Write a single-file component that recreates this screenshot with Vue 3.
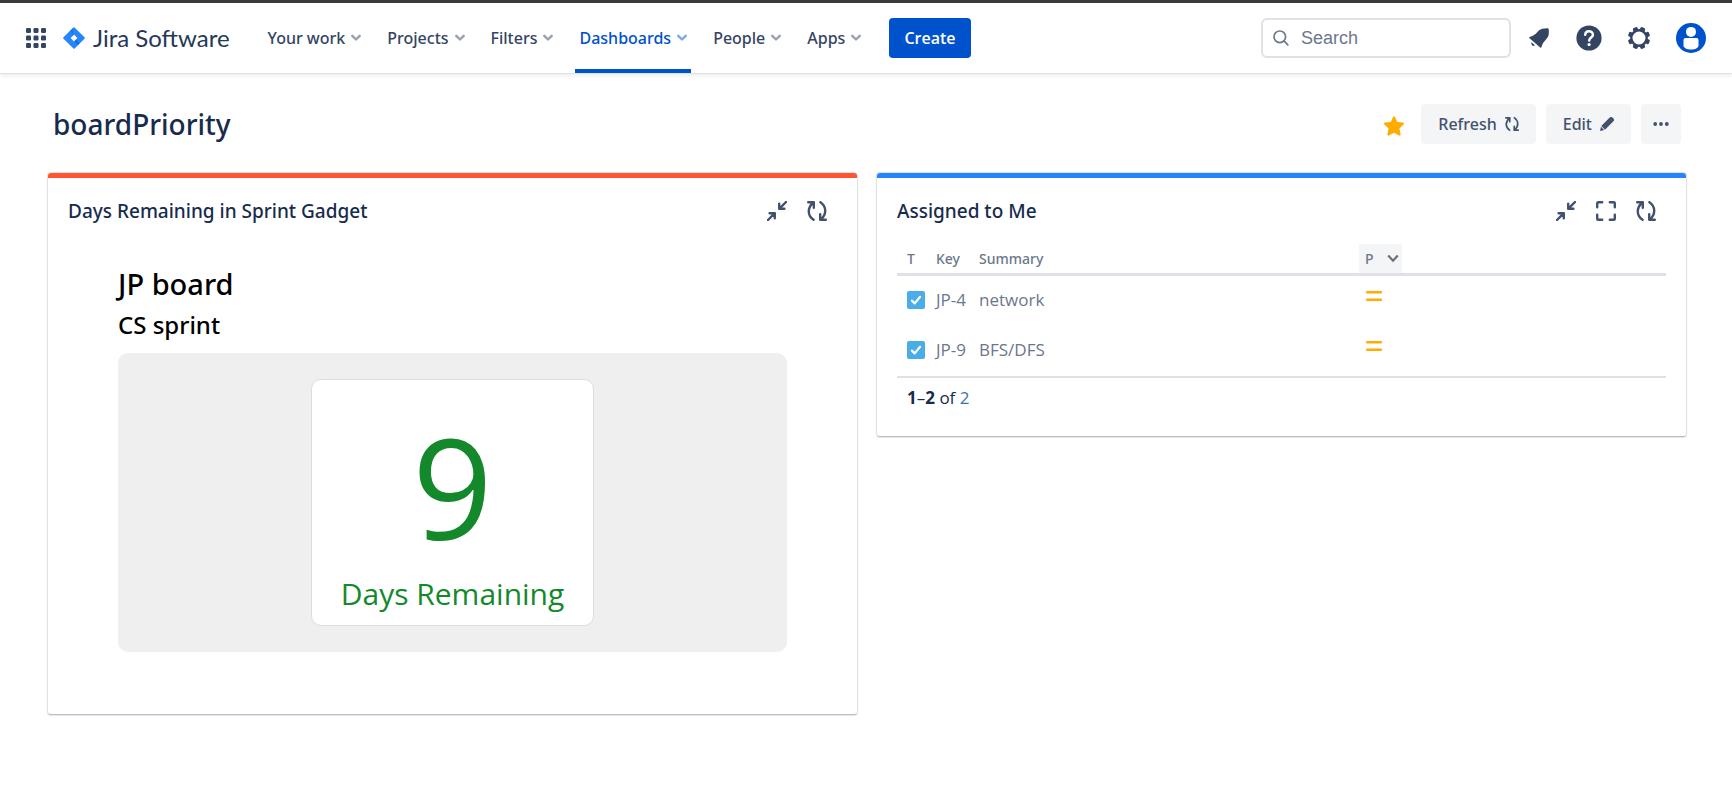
<script setup>
import { ref } from 'vue'

const navItems = [
  { label: 'Your work' },
  { label: 'Projects' },
  { label: 'Filters' },
  { label: 'Dashboards', active: true },
  { label: 'People' },
  { label: 'Apps' }
]

const issues = [
  { key: 'JP-4', summary: 'network' },
  { key: 'JP-9', summary: 'BFS/DFS' }
]

const dots = [0, 1, 2].flatMap((r) => [0, 1, 2].map((c) => ({ x: c * 7.5, y: r * 7.5 })))
const query = ref('')
</script>

<template>
  <div class="page">
    <header class="topbar">
      <button class="icon-btn switcher" type="button" aria-label="Switch to another product">
        <svg width="20" height="20" viewBox="0 0 20 20" fill="#344563">
          <rect v-for="(d, i) in dots" :key="i" :x="d.x" :y="d.y" width="5" height="5" rx="1.2" />
        </svg>
      </button>
      <a class="brand" href="#">
        <svg width="22" height="22" viewBox="0 0 22 22" aria-hidden="true">
          <defs>
            <linearGradient id="fold-a" x1="0.9" y1="0" x2="0.4" y2="0.6">
              <stop offset="0.2" stop-color="#0052cc" />
              <stop offset="1" stop-color="#2684ff" />
            </linearGradient>
          </defs>
          <path d="M11 0 21.5 10.3a1 1 0 0 1 0 1.4L11 22 .5 11.700a1 1 0 0 1 0-1.400zM11 7.600 7.600 11 11 14.400 14.400 11z" fill="#2684ff" fill-rule="evenodd" />
          <path d="M11 7.600C8.800 5.400 8.800 2.500 10.800.400L5.500 5.500 9.300 9.300z" fill="url(#fold-a)" />
          <path d="M11 14.400c2.200 2.200 2.200 5.100.200 7.200l5.300-5.100-3.800-3.800z" fill="url(#fold-a)" />
        </svg>
        <span>Jira Software</span>
      </a>
      <nav class="nav" aria-label="Primary">
        <button v-for="item in navItems" :key="item.label" type="button" class="nav-item" :class="{ active: item.active }">
          {{ item.label }}
          <svg width="10" height="8" viewBox="0 0 10 8" fill="none" stroke="currentColor" stroke-width="2.400" stroke-linecap="round" stroke-linejoin="round">
            <path d="M1.300 1.800 5 5.500 8.700 1.800" />
          </svg>
        </button>
      </nav>
      <button class="create" type="button">Create</button>
      <div class="tools">
        <label class="search">
          <svg width="16" height="16" viewBox="0 0 16 16" fill="none" stroke="#6b778c" stroke-width="1.700" stroke-linecap="round">
            <circle cx="6.800" cy="6.800" r="5.800" />
            <path d="m11.200 11.200 3.600 3.600" />
          </svg>
          <input v-model="query" type="text" placeholder="Search" aria-label="Search" />
        </label>
        <button class="icon-btn bell" type="button" aria-label="Notifications">
          <svg width="20" height="20" viewBox="0 0 20 20" fill="#344563">
            <path d="M.6 8.900C3.400 8 6 6.700 8.200 4.200 10.500 1.500 12.500.300 15.500.400l2.800-.1c1 0 1.500.500 1.500 1.500V5.500c-.1 2.400-1 4.200-3.200 6.400-2.400 2.300-3.300 4.100-4.100 7.200-.2.800-.7 1-1.300.400L.3 10.100C-.1 9.600 0 9.100.600 8.900z" />
            <path d="M2.600 14.200 6 17.600a2.500 2.500 0 0 1-3.400-3.400z" />
          </svg>
        </button>
        <button class="icon-btn" type="button" aria-label="Help">
          <svg width="26" height="26" viewBox="0 0 26 26">
            <circle cx="13" cy="13" r="12.600" fill="#344563" />
            <path d="M9.200 9.700C9.300 7.500 10.900 6.200 13 6.200s3.900 1.400 3.900 3.500c0 2.900-3.700 2.900-3.700 5.900" fill="none" stroke="#fff" stroke-width="2.500" stroke-linecap="round" />
            <circle cx="13.100" cy="19.500" r="1.600" fill="#fff" />
          </svg>
        </button>
        <button class="icon-btn" type="button" aria-label="Settings">
          <svg width="24" height="24" viewBox="0 0 24 24">
            <g fill="#344563">
              <rect v-for="a in 8" :key="a" x="9.500" y="0.800" width="5" height="6" rx="1.500" :transform="`rotate(${a * 45 + 22.5} 12 12)`" />
            </g>
            <circle cx="12" cy="12" r="7.700" fill="#fff" stroke="#344563" stroke-width="2.400" />
          </svg>
        </button>
        <button class="icon-btn" type="button" aria-label="Your profile">
          <svg width="30" height="30" viewBox="0 0 30 30">
            <circle cx="15" cy="15" r="15" fill="#0052cc" />
            <circle cx="15" cy="8.900" r="5" fill="#fff" />
            <path d="M9.500 15h11a2 2 0 0 1 2 2v5.500c0 2.500-3.500 4-7.500 4s-7.500-1.500-7.500-4V17a2 2 0 0 1 2-2z" fill="#fff" />
          </svg>
        </button>
      </div>
    </header>

    <main class="content">
      <div class="heading">
        <h1>boardPriority</h1>
        <div class="actions">
          <button class="icon-btn star" type="button" aria-label="Starred">
            <svg width="20" height="20" viewBox="0 0 20 20" fill="#ffab00">
              <path d="M9.100.800c.4-.8 1.400-.8 1.800 0l2.300 5.200 5.800.6c1 .1 1.300 1.100.600 1.800l-4.200 4 1.200 5.900c.2 1-.6 1.600-1.500 1.200L10 16.700l-5.100 2.800c-.9.400-1.700-.2-1.500-1.200l1.200-5.900-4.200-4C-.3 7.700 0 6.700 1 6.600L6.800 6z" />
            </svg>
          </button>
          <button class="action" type="button">
            Refresh
            <svg width="14" height="14" viewBox="0 0 20 20" class="stroke-icon">
              <path d="M1.200 1.200H6.800V6.800M6.500 1.500C.2 6.500.2 14.500 6.600 18.800M18.800 18.800H13.200V13.200M13.500 18.500C19.800 13.500 19.800 5.500 13.400 1.200" />
            </svg>
          </button>
          <button class="action" type="button">
            Edit
            <svg width="14" height="14" viewBox="0 0 14 14" fill="#42526e">
              <path d="M8.700 1.600 9.700.600a2 2 0 0 1 2.800 0l.9.900a2 2 0 0 1 0 2.800L12.400 5.300 5 12.700 1.300 9zM.9 9.800l3.300 3.300-3.500.8c-.4.100-.6-.1-.5-.5z" />
            </svg>
          </button>
          <button class="action more" type="button" aria-label="More">
            <svg width="16" height="4" viewBox="0 0 16 4" fill="#42526e">
              <circle cx="2.200" cy="2" r="1.900" /><circle cx="8" cy="2" r="1.900" /><circle cx="13.800" cy="2" r="1.900" />
            </svg>
          </button>
        </div>
      </div>

      <div class="gadgets">
        <section class="gadget red">
          <div class="gadget-head">
            <h2>Days Remaining in Sprint Gadget</h2>
            <div class="gadget-tools">
              <button class="icon-btn" type="button" aria-label="Minimize">
                <svg width="20" height="20" viewBox="0 0 20 20" class="stroke-icon">
                  <path d="M19 1 12.200 7.800M12.200 2.800V7.800H17.400M1 19 7.800 12.200M2.600 12.200H7.800V17.200" />
                </svg>
              </button>
              <button class="icon-btn" type="button" aria-label="Refresh gadget">
                <svg width="20" height="20" viewBox="0 0 20 20" class="stroke-icon">
                  <path d="M1.200 1.200H6.800V6.800M6.500 1.500C.2 6.500.2 14.500 6.600 18.800M18.800 18.800H13.200V13.200M13.500 18.500C19.800 13.500 19.800 5.500 13.400 1.200" />
                </svg>
              </button>
            </div>
          </div>
          <div class="sprint">
            <h3>JP board</h3>
            <h4>CS sprint</h4>
            <div class="panel">
              <div class="counter">
                <div class="number">9</div>
                <div class="caption">Days Remaining</div>
              </div>
            </div>
          </div>
        </section>

        <section class="gadget blue">
          <div class="gadget-head">
            <h2>Assigned to Me</h2>
            <div class="gadget-tools">
              <button class="icon-btn" type="button" aria-label="Minimize">
                <svg width="20" height="20" viewBox="0 0 20 20" class="stroke-icon">
                  <path d="M19 1 12.200 7.800M12.200 2.800V7.800H17.400M1 19 7.800 12.200M2.600 12.200H7.800V17.200" />
                </svg>
              </button>
              <button class="icon-btn" type="button" aria-label="Maximize">
                <svg width="20" height="20" viewBox="0 0 20 20" class="stroke-icon">
                  <path d="M1.200 6.200V2.200a1 1 0 0 1 1-1H6.200M13.800 1.200H17.800a1 1 0 0 1 1 1V6.200M18.800 13.800V17.800a1 1 0 0 1-1 1H13.800M6.200 18.800H2.200a1 1 0 0 1-1-1V13.800" />
                </svg>
              </button>
              <button class="icon-btn" type="button" aria-label="Refresh gadget">
                <svg width="20" height="20" viewBox="0 0 20 20" class="stroke-icon">
                  <path d="M1.200 1.200H6.800V6.800M6.500 1.500C.2 6.500.2 14.500 6.600 18.800M18.800 18.800H13.200V13.200M13.500 18.500C19.800 13.500 19.800 5.500 13.400 1.200" />
                </svg>
              </button>
            </div>
          </div>
          <div class="issues">
            <table>
              <colgroup>
                <col class="c-type" /><col class="c-key" /><col /><col class="c-priority" /><col class="c-rest" />
              </colgroup>
              <thead>
                <tr>
                  <th>T</th>
                  <th>Key</th>
                  <th>Summary</th>
                  <th class="sorted">
                    <button type="button">
                      P
                      <svg width="12" height="9" viewBox="0 0 12 9" fill="none" stroke="#6b6e76" stroke-width="2.200">
                        <path d="M1.200 1.600 6 6.700 10.800 1.600" />
                      </svg>
                    </button>
                  </th>
                  <th></th>
                </tr>
              </thead>
              <tbody>
                <tr v-for="issue in issues" :key="issue.key">
                  <td>
                    <svg width="18" height="18" viewBox="0 0 18 18" role="img" aria-label="Task">
                      <rect width="18" height="18" rx="2" fill="#4bade8" />
                      <path d="m4.900 9.600 2.800 2.800 5.400-6.600" fill="none" stroke="#fff" stroke-width="2.200" stroke-linecap="round" stroke-linejoin="round" />
                    </svg>
                  </td>
                  <td><a href="#">{{ issue.key }}</a></td>
                  <td><a href="#">{{ issue.summary }}</a></td>
                  <td class="priority">
                    <svg width="16" height="10" viewBox="0 0 16 10" role="img" aria-label="Medium" fill="#ffab00">
                      <rect width="16" height="2.600" rx="1" /><rect y="7.400" width="16" height="2.600" rx="1" />
                    </svg>
                  </td>
                  <td></td>
                </tr>
              </tbody>
            </table>
            <p class="count"><b>1</b>–<b>2</b> of <a href="#">2</a></p>
          </div>
        </section>
      </div>
    </main>
  </div>
</template>

<style>
body {
  margin: 0;
  background: #fff;
}
</style>

<style scoped>
.page {
  font-family: "Open Sans", "Noto Sans", sans-serif;
  color: #172b4d;
  border-top: 3px solid #3a3a3e;
}
button {
  font: inherit;
  color: inherit;
  border: 0;
  background: none;
  padding: 0;
  cursor: pointer;
}
a {
  color: inherit;
  text-decoration: none;
}
h1, h2, h3, h4, p {
  margin: 0;
  font-weight: 500;
}
h1, h2, h3, h4, th, .nav-item, .action {
  font-family: "Noto Sans", "Open Sans", sans-serif;
}
svg {
  display: block;
  flex: none;
}
.stroke-icon {
  fill: none;
  stroke: #42526e;
  stroke-width: 2.400;
  stroke-linecap: round;
  stroke-linejoin: round;
}
.icon-btn {
  display: flex;
}
.topbar {
  display: flex;
  align-items: center;
  height: 70px;
  padding: 0 26px;
  border-bottom: 1px solid #dfe1e6;
  box-shadow: 0 2px 4px rgba(9, 30, 66, 0.08);
}
.brand {
  display: flex;
  align-items: center;
  gap: 8px;
  margin-left: 17px;
  font: 24px/32px Lato, sans-serif;
  color: #253858;
}
.nav {
  display: flex;
  align-self: stretch;
  gap: 18px;
  margin-left: 34px;
}
.nav-item {
  display: flex;
  align-items: center;
  gap: 6px;
  padding: 4px 4px 0;
  border-bottom: 4px solid transparent;
  font-size: 16px;
  font-weight: 500;
  color: #344563;
}
.nav-item svg {
  opacity: 0.5;
}
.nav-item.active {
  color: #0052cc;
  border-bottom-color: #0052cc;
}
.create {
  height: 40px;
  margin-left: 24px;
  padding: 0 15px;
  border-radius: 4px;
  background: #0052cc;
  color: #fff;
  font-size: 16px;
  font-weight: 600;
}
.tools {
  display: flex;
  align-items: center;
  gap: 25px;
  margin-left: auto;
}
.bell {
  margin-right: 2px;
}
.search {
  display: flex;
  align-items: center;
  gap: 12px;
  box-sizing: border-box;
  width: 250px;
  height: 40px;
  padding: 0 10px;
  margin-right: -7px;
  border: 2px solid #dfe1e6;
  border-radius: 6px;
}
.search input {
  flex: 1;
  min-width: 0;
  border: 0;
  outline: 0;
  padding: 0;
  background: none;
  color: #172b4d;
  font: 18px/24px "Liberation Sans", Arial, sans-serif;
}
.search input::placeholder {
  color: #6b778c;
}
.content {
  padding: 29px 45px 24px 47px;
}
.heading {
  display: flex;
  align-items: center;
  justify-content: space-between;
  padding: 0 6px;
}
h1 {
  font-size: 28px;
  line-height: 42px;
}
.actions {
  display: flex;
  align-items: center;
  gap: 10px;
}
.star {
  margin: 4px 7px 0 0;
}
.action {
  display: flex;
  align-items: center;
  gap: 8px;
  height: 40px;
  padding: 0 17px;
  border-radius: 4px;
  background: #f4f5f7;
  color: #42526e;
  font-size: 16px;
  font-weight: 500;
}
.more {
  padding: 0 12px;
}
.gadgets {
  display: grid;
  grid-template-columns: 1fr 1fr;
  align-items: start;
  gap: 18px;
  margin-top: 27px;
}
.gadget {
  border: 1px solid #dfe1e6;
  border-bottom-color: #b7bfcc;
  border-radius: 4px;
  box-shadow: 0 1px 1px rgba(9, 30, 66, 0.12);
  overflow: hidden;
}
.gadget::before {
  content: "";
  display: block;
  height: 5px;
}
.red::before {
  background: #ff5630;
}
.blue::before {
  background: #2684ff;
}
.gadget-head {
  display: flex;
  align-items: center;
  justify-content: space-between;
  height: 66px;
  padding: 0 30px 0 20px;
}
h2 {
  font-size: 19px;
  line-height: 24px;
}
.gadget-tools {
  display: flex;
  gap: 20px;
}
.sprint {
  padding: 18px 70px 62px;
  color: #000;
}
h3 {
  font-size: 29px;
  line-height: 44px;
}
h4 {
  font-size: 24px;
  line-height: 38px;
}
.panel {
  display: flex;
  justify-content: center;
  padding: 26px;
  margin-top: 9px;
  border-radius: 10px;
  background: #efefef;
}
.counter {
  box-sizing: border-box;
  width: 283px;
  padding: 22px 0 7px;
  border: 1px solid #ddd;
  border-radius: 10px;
  background: #fff;
  color: #14892c;
  text-align: center;
}
.number {
  font-size: 140px;
  line-height: 168px;
}
.caption {
  font-size: 30px;
  line-height: 48px;
}
.issues {
  padding: 0 20px 18px;
}
table {
  width: 100%;
  table-layout: fixed;
  border-collapse: collapse;
  border-bottom: 2px solid #dfe1e6;
}
.c-type { width: 31px; }
.c-key { width: 43px; }
.c-priority { width: 43px; }
.c-rest { width: 264px; }
th {
  height: 29px;
  padding: 0 0 0 8px;
  border-bottom: 3px solid #dfe1e6;
  font-size: 14px;
  font-weight: 500;
  text-align: left;
  color: #6b778c;
}
.sorted {
  padding: 0 3px 0 6px;
  background: #f4f5f7;
}
.sorted button {
  display: flex;
  align-items: center;
  justify-content: space-between;
  width: 100%;
}
td {
  height: 47px;
  padding: 0 0 3px 8px;
  font-size: 17px;
  color: #6b778c;
  white-space: nowrap;
}
th:first-child,
td:first-child {
  padding-left: 10px;
}
td.priority {
  padding-left: 7px;
}
.priority svg {
  margin-bottom: 8px;
}
.count {
  padding: 8px 10px;
  font-size: 17px;
  line-height: 24px;
  font-weight: 400;
}
.count a {
  color: #3b73af;
}
</style>
